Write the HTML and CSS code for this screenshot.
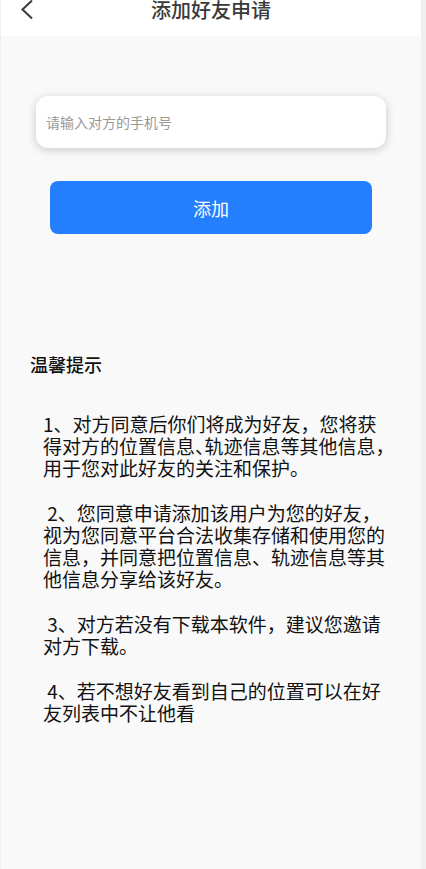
FILE: index.html
```html
<!DOCTYPE html>
<html lang="zh-CN">
<head>
  <meta charset="UTF-8">
  <meta name="viewport" content="width=device-width, initial-scale=1">
  <title>添加好友申请</title>
  <link rel="stylesheet" href="styles.css">
</head>
<body>
  <header class="navbar">
    <button class="back" type="button" aria-label="返回">
      <svg width="14" height="20" viewBox="0 0 14 20" fill="none" stroke="#3a3a3a" stroke-width="2">
        <path d="M12 0.5 L2.5 9.5 L12 18.5"/>
      </svg>
    </button>
    <h1 class="title">添加好友申请</h1>
  </header>

  <main class="content">
    <form class="add-form">
      <input class="phone" type="tel" placeholder="请输入对方的手机号" aria-label="对方的手机号">
      <button class="submit" type="button">添加</button>
    </form>

    <section class="tips">
      <h2 class="tips-title">温馨提示</h2>
      <div class="tips-text">
        <p>1、对方同意后你们将成为好友，您将获<br>得对方的位置信息<span class="half">、</span>轨迹信息等其他信息，<br>用于您对此好友的关注和保护。</p>
        <p>&nbsp;2、您同意申请添加该用户为您的好友，<br>视为您同意平台合法收集存储和使用您的<br>信息，并同意把位置信息、轨迹信息等其<br>他信息分享给该好友。</p>
        <p>&nbsp;3、对方若没有下载本软件，建议您邀请<br>对方下载。</p>
        <p>&nbsp;4、若不想好友看到自己的位置可以在好<br>友列表中不让他看</p>
      </div>
    </section>
  </main>
</body>
</html>
```

FILE: styles.css
```css
* {
  box-sizing: border-box;
}
body {
  margin: 0;
  min-height: 100vh;
  background: #f9f9f9;
  border-left: 1px solid #f0f0f0;
  border-right: 5px solid #f0f0f0;
  color: #111;
  font-family: "Noto Sans CJK SC", sans-serif;
}
h1, h2, p {
  margin: 0;
}
button, input {
  font-family: inherit;
  border: none;
}
.navbar {
  display: grid;
  grid-template-columns: 48px 1fr 48px;
  align-items: start;
  height: 36px;
  background: #fff;
}
.back {
  display: flex;
  padding: 0 0 0 19px;
  background: none;
  cursor: pointer;
}
.title {
  color: #3a3a3a;
  font-size: 20px;
  font-weight: 500;
  line-height: 20px;
  text-align: center;
}
.content {
  padding: 60px 29px 40px;
}
.add-form {
  display: flex;
  flex-direction: column;
  gap: 33px;
  padding: 0 6px;
}
.phone {
  height: 52px;
  padding: 0 10px;
  border-radius: 12px;
  background: #fff;
  box-shadow: 0 2px 10px rgba(0, 0, 0, 0.2);
  font-size: 14px;
}
.phone::placeholder {
  color: #999;
}
.submit {
  height: 53px;
  margin: 0 14px;
  border-radius: 8px;
  background: #247fff;
  color: #fff;
  font-size: 18px;
  cursor: pointer;
}
.tips {
  margin-top: 119px;
}
.tips-title {
  font-size: 18px;
  font-weight: 500;
  line-height: 22px;
}
.tips-text {
  display: flex;
  flex-direction: column;
  gap: 23px;
  margin-top: 38px;
  padding-left: 13px;
  font-size: 19px;
  line-height: 22px;
  white-space: nowrap;
}
.half {
  font-feature-settings: "halt";
}
```
